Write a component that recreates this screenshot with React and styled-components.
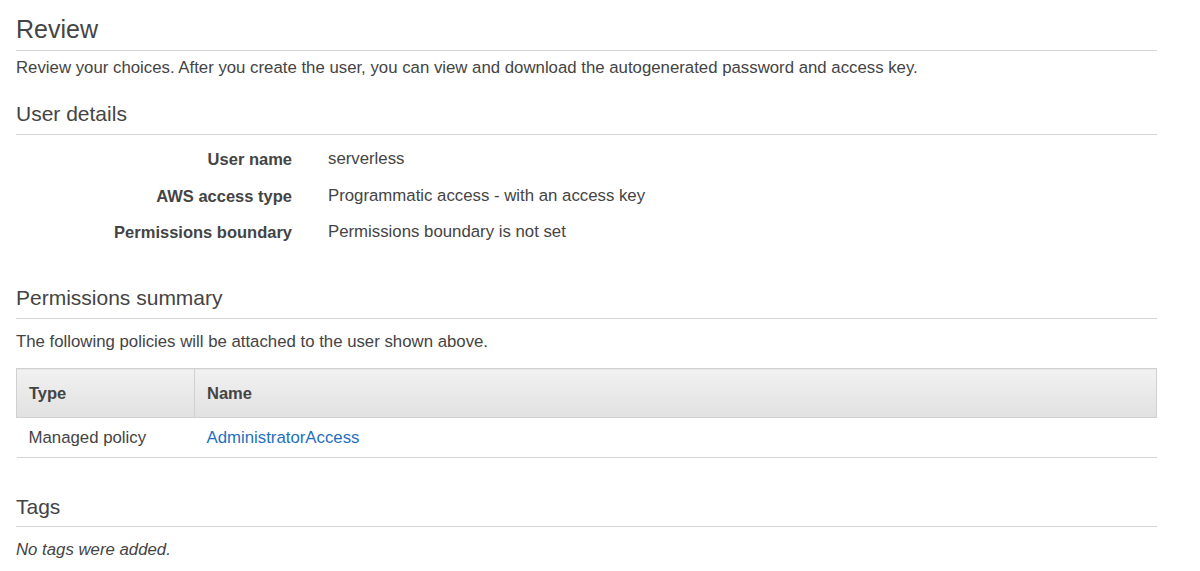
import React from "react";
import styled, { createGlobalStyle } from "styled-components";

const GlobalStyle = createGlobalStyle`
  body {
    margin: 0;
    background: #ffffff;
    font-family: "Liberation Sans", Arial, sans-serif;
    color: #444;
  }
`;

const Page = styled.div`
  width: 1141px;
  padding: 14px 0 0 16px;
`;

const Title = styled.h2`
  margin: ${(p) => p.$top || 0}px 0 0;
  font-size: ${(p) => (p.$big ? 25 : 21)}px;
  line-height: ${(p) => (p.$big ? 30 : 26)}px;
  font-weight: 400;
  color: #444;
  padding-bottom: ${(p) => (p.$pad != null ? p.$pad : 7)}px;
  border-bottom: 1px solid #d5d5d5;
`;

const Text = styled.p`
  margin: ${(p) => p.$top || 0}px 0 0;
  font-size: 16.8px;
  line-height: 20px;
  color: #444;
  font-style: ${(p) => (p.$italic ? "italic" : "normal")};
`;

const Details = styled.div`
  margin-top: 14px;
  display: grid;
  grid-template-columns: 276px 1fr;
  column-gap: 36px;
  row-gap: 16.5px;
  font-size: 16.8px;
  line-height: 20px;
`;

const Label = styled.div`
  text-align: right;
  font-weight: 700;
  font-size: 16.5px;
  color: #444;
`;

const Value = styled.div`
  color: #444;
`;

const Table = styled.table`
  margin-top: 16px;
  width: 100%;
  border-collapse: collapse;
  font-size: 16.8px;
`;

const Th = styled.th`
  height: 48px;
  padding: 0 12px;
  text-align: left;
  font-weight: 700;
  font-size: 16.5px;
  color: #444;
  background: linear-gradient(#f1f1f1, #e1e1e1);
  border: 1px solid #d0d0d0;
  width: ${(p) => p.$w || "auto"};
`;

const Td = styled.td`
  height: 39px;
  padding: 0 12px;
  color: #444;
  border-bottom: 1px solid #d5d5d5;
`;

const Link = styled.a`
  color: #1f6fbf;
  text-decoration: none;
  cursor: pointer;
`;

export default function App() {
  return (
    <Page>
      <GlobalStyle />
      <Title $big $pad={6}>Review</Title>
      <Text $top={7}>
        Review your choices. After you create the user, you can view and download the autogenerated password and access key.
      </Text>

      <Title $top={23}>User details</Title>
      <Details>
        <Label>User name</Label>
        <Value>serverless</Value>
        <Label>AWS access type</Label>
        <Value>Programmatic access - with an access key</Value>
        <Label>Permissions boundary</Label>
        <Value>Permissions boundary is not set</Value>
      </Details>

      <Title $top={43}>Permissions summary</Title>
      <Text $top={13}>The following policies will be attached to the user shown above.</Text>
      <Table>
        <thead>
          <tr>
            <Th $w="153px">Type</Th>
            <Th>Name</Th>
          </tr>
        </thead>
        <tbody>
          <tr>
            <Td>Managed policy</Td>
            <Td>
              <Link>AdministratorAccess</Link>
            </Td>
          </tr>
        </tbody>
      </Table>

      <Title $top={36} $pad={6}>Tags</Title>
      <Text $top={13} $italic>No tags were added.</Text>
    </Page>
  );
}
